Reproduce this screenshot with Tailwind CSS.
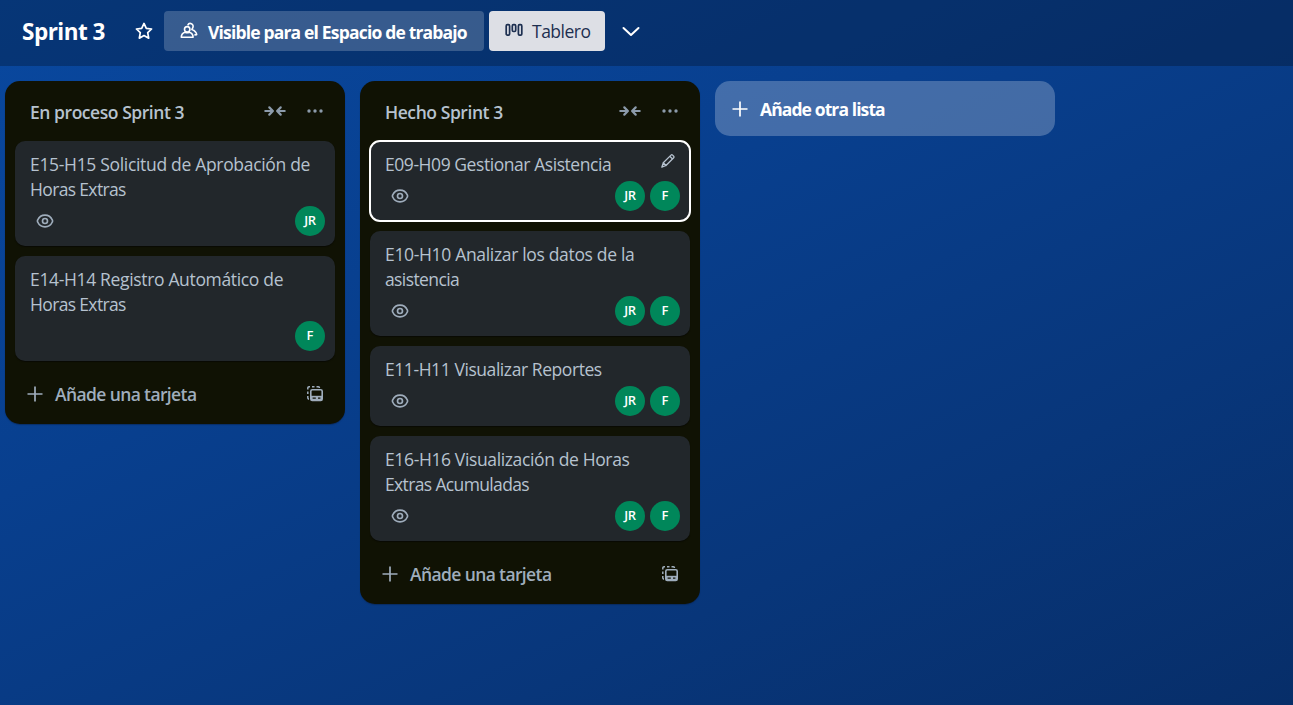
<!DOCTYPE html>
<html lang="es">
<head>
<meta charset="utf-8">
<title>Sprint 3</title>
<script src="https://cdn.jsdelivr.net/npm/@tailwindcss/browser@4"></script>
</head>
<body class="h-[705px] w-[1293px] overflow-hidden bg-[linear-gradient(155deg,#09489f_0%,#083f8e_38%,#08367a_72%,#072e69_100%)] font-['Open_Sans','Noto_Sans',sans-serif] text-[17.5px] leading-[25px] text-[#b6c2cf]">
<svg class="hidden">
  <symbol id="eye" viewBox="0 0 24 24"><g fill="none" stroke="currentColor" stroke-width="2"><path d="M12 5C7 5 4.500 8 3.200 10.800a2.500 2.500 0 0 0 0 2.400C4.500 16 7 19 12 19s7.500-3 8.800-5.800a2.500 2.500 0 0 0 0-2.400C19.500 8 17 5 12 5z"/><circle cx="12" cy="12" r="3"/></g></symbol>
  <symbol id="collapse" viewBox="0 0 24 14"><path d="M2.300 7H9.500M6.300 3.400 9.900 7 6.300 10.600M21.700 7H14.500M17.700 3.400 14.100 7l3.600 3.600" fill="none" stroke="currentColor" stroke-width="2.200" stroke-linecap="round" stroke-linejoin="round"/></symbol>
  <symbol id="dots" viewBox="0 0 20 20"><g fill="currentColor"><circle cx="4" cy="10" r="1.700"/><circle cx="10" cy="10" r="1.700"/><circle cx="16" cy="10" r="1.700"/></g></symbol>
  <symbol id="plus" viewBox="0 0 20 20"><path d="M10 2.500v15M2.500 10h15" fill="none" stroke="currentColor" stroke-width="1.700"/></symbol>
  <symbol id="template" viewBox="0 0 20 20"><path d="M2.800 5.500V4a1.200 1.200 0 0 1 1.200-1.200h1M7 2.800h2.500M11.500 2.800h1.800q1.200 0 1.200 1.200M2.800 7.500v2.500M2.800 12v1.800a1.200 1.200 0 0 0 1.200 1.200" fill="none" stroke="currentColor" stroke-width="1.500"/><rect x="5.800" y="5.800" width="11.400" height="10.600" rx="1.500" fill="none" stroke="currentColor" stroke-width="1.600"/><path d="M6 11.800h11v4.600H6z" fill="currentColor"/><path d="M7.600 13.400h3.200v1.300H7.600zM13 13.400h2.400v1.300H13z" fill="#101204"/></symbol>
</svg>

<header class="flex h-[66px] items-center bg-black/25 pb-1 pl-[22px] text-white">
  <h1 class="w-[112px] text-[22.5px] font-bold tracking-[-0.5px]">Sprint 3</h1>
  <svg class="size-5 shrink-0" viewBox="0 0 20 20"><path d="M10 2.400 12.300 7.400 17.600 8 13.700 11.700 14.700 17.200 10 14.500 5.300 17.200 6.300 11.700 2.400 8 7.700 7.400z" fill="none" stroke="currentColor" stroke-width="1.700" stroke-linejoin="round"/></svg>
  <div class="ml-[10px] flex h-10 w-[320px] items-center rounded bg-white/20 pl-[15px]">
    <svg class="size-5 shrink-0" viewBox="0 0 20 20"><g fill="none" stroke="currentColor" stroke-width="1.600" stroke-linejoin="round"><circle cx="8.200" cy="8.300" r="2.700"/><path d="M2.300 16.300c0-2.700 1.900-4.600 4-5.100q1.900 1 3.800 0c2.100.5 4 2.400 4 5.100z"/><path d="M8.700 4.300c.8-1.700 2.300-2.200 3.700-1.600 1.800.8 2.200 2.800 1.200 4.500l-.7 1.300c2.600 1 4.500 2.900 4.800 5.200l-2.300.2"/></g></svg>
    <span class="ml-[9px] whitespace-nowrap pt-[3px] font-bold tracking-[-0.82px]">Visible para el Espacio de trabajo</span>
  </div>
  <div class="ml-[5px] flex h-10 w-[116px] items-center rounded bg-[#dddfe5] pl-[15px] text-[#1d2f50]">
    <svg class="mt-[-3px] size-5 shrink-0" viewBox="0 0 20 20"><g fill="none" stroke="currentColor" stroke-width="1.700"><rect x="2.200" y="4.700" width="3.400" height="10.400" rx="1.200"/><rect x="8.300" y="4.700" width="3.400" height="6.800" rx="1.200"/><rect x="14.400" y="4.700" width="3.400" height="10.400" rx="1.200"/></g></svg>
    <span class="ml-2 pt-[1px] tracking-[-0.5px]">Tablero</span>
  </div>
  <svg class="ml-[15.500px] size-5" viewBox="0 0 20 20"><path d="M2.500 7 10 14l7.500-7" fill="none" stroke="currentColor" stroke-width="2" stroke-linecap="round" stroke-linejoin="round"/></svg>
</header>

<main class="flex items-start gap-[15px] pt-[15px] pl-[5px]">
  <section class="flex h-[343px] w-[340px] flex-col gap-[10px] rounded-[15px] bg-[#101204] px-[10px] shadow-[0_1px_1px_#091e4280]">
    <div class="flex h-[50px] items-center pl-[15px]">
      <h2 class="flex-1 pt-[13px] font-semibold tracking-[-0.45px]">En proceso Sprint 3</h2>
      <svg class="mt-[10px] h-[14px] w-6 text-[#8c9bab]"><use href="#collapse"/></svg>
      <svg class="mt-[10px] mr-[10px] ml-[18px] size-5 text-[#8c9bab]"><use href="#dots"/></svg>
    </div>
    <article class="flex h-[105px] flex-col rounded-[10px] bg-[#22272b] pt-[11px] pr-[10px] pl-[15px] shadow-[0_1px_1px_#03040480]">
      <p class="whitespace-nowrap tracking-[-0.32px]">E15-H15 Solicitud de Aprobación de<br><span class="tracking-[-0.65px]">Horas Extras</span></p>
      <div class="mt-1 flex items-center gap-[5px]"><svg class="mr-auto ml-[5px] size-5 text-[#9fadbc]"><use href="#eye"/></svg><span class="grid size-[30px] place-items-center rounded-full bg-[#00875a] pb-px text-[13px] font-semibold text-white tracking-[-0.3px]">JR</span></div>
    </article>
    <article class="flex h-[105px] flex-col rounded-[10px] bg-[#22272b] pt-[11px] pr-[10px] pl-[15px] shadow-[0_1px_1px_#03040480]">
      <p class="whitespace-nowrap tracking-[-0.34px]">E14-H14 Registro Automático de<br><span class="tracking-[-0.65px]">Horas Extras</span></p>
      <div class="mt-1 flex items-center justify-end"><span class="grid size-[30px] place-items-center rounded-full bg-[#00875a] pb-px text-[13px] font-semibold text-white">F</span></div>
    </article>
    <footer class="flex h-[46px] items-center pl-[10px] text-[#9fadbc]">
      <svg class="size-5"><use href="#plus"/></svg>
      <span class="ml-[10px] flex-1 pt-[1px] font-semibold tracking-[-0.62px]">Añade una tarjeta</span>
      <svg class="mr-[10px] size-5"><use href="#template"/></svg>
    </footer>
  </section>

  <section class="flex h-[523px] w-[340px] flex-col gap-[10px] rounded-[15px] bg-[#101204] px-[10px] shadow-[0_1px_1px_#091e4280]">
    <div class="flex h-[50px] items-center pl-[15px]">
      <h2 class="flex-1 pt-[13px] font-semibold tracking-[-0.43px]">Hecho Sprint 3</h2>
      <svg class="mt-[10px] h-[14px] w-6 text-[#8c9bab]"><use href="#collapse"/></svg>
      <svg class="mt-[10px] mr-[10px] ml-[18px] size-5 text-[#8c9bab]"><use href="#dots"/></svg>
    </div>
    <article class="flex h-[80px] flex-col rounded-[10px] bg-[#22272b] pt-[11px] pr-[10px] pl-[15px] outline-2 -outline-offset-1 outline-white">
      <div class="flex items-center justify-between"><p class="whitespace-nowrap tracking-[-0.44px]">E09-H09 Gestionar Asistencia</p><svg class="mt-[-8px] mr-[2px] size-5" viewBox="0 0 20 20"><g fill="none" stroke="currentColor" stroke-width="1.300" stroke-linejoin="round"><path d="m5.300 11.800 7.700-7.700q.8-.8 1.600 0l1.100 1.100q.8.800 0 1.600l-7.700 7.700zM5.300 11.800l-1.500 4.400 4.200-1.700M11.800 5.300 14.500 8"/></g></svg></div>
      <div class="mt-1 flex items-center gap-[5px]"><svg class="mr-auto ml-[5px] size-5 text-[#9fadbc]"><use href="#eye"/></svg><span class="grid size-[30px] place-items-center rounded-full bg-[#00875a] pb-px text-[13px] font-semibold text-white tracking-[-0.3px]">JR</span><span class="grid size-[30px] place-items-center rounded-full bg-[#00875a] pb-px text-[13px] font-semibold text-white">F</span></div>
    </article>
    <article class="flex h-[105px] flex-col rounded-[10px] bg-[#22272b] pt-[11px] pr-[10px] pl-[15px] shadow-[0_1px_1px_#03040480]">
      <p class="whitespace-nowrap tracking-[-0.33px]">E10-H10 Analizar los datos de la<br><span class="tracking-[-0.6px]">asistencia</span></p>
      <div class="mt-1 flex items-center gap-[5px]"><svg class="mr-auto ml-[5px] size-5 text-[#9fadbc]"><use href="#eye"/></svg><span class="grid size-[30px] place-items-center rounded-full bg-[#00875a] pb-px text-[13px] font-semibold text-white tracking-[-0.3px]">JR</span><span class="grid size-[30px] place-items-center rounded-full bg-[#00875a] pb-px text-[13px] font-semibold text-white">F</span></div>
    </article>
    <article class="flex h-[80px] flex-col rounded-[10px] bg-[#22272b] pt-[11px] pr-[10px] pl-[15px] shadow-[0_1px_1px_#03040480]">
      <p class="whitespace-nowrap tracking-[-0.43px]">E11-H11 Visualizar Reportes</p>
      <div class="mt-1 flex items-center gap-[5px]"><svg class="mr-auto ml-[5px] size-5 text-[#9fadbc]"><use href="#eye"/></svg><span class="grid size-[30px] place-items-center rounded-full bg-[#00875a] pb-px text-[13px] font-semibold text-white tracking-[-0.3px]">JR</span><span class="grid size-[30px] place-items-center rounded-full bg-[#00875a] pb-px text-[13px] font-semibold text-white">F</span></div>
    </article>
    <article class="flex h-[105px] flex-col rounded-[10px] bg-[#22272b] pt-[11px] pr-[10px] pl-[15px] shadow-[0_1px_1px_#03040480]">
      <p class="whitespace-nowrap tracking-[-0.37px]">E16-H16 Visualización de Horas<br><span class="tracking-[-0.64px]">Extras Acumuladas</span></p>
      <div class="mt-1 flex items-center gap-[5px]"><svg class="mr-auto ml-[5px] size-5 text-[#9fadbc]"><use href="#eye"/></svg><span class="grid size-[30px] place-items-center rounded-full bg-[#00875a] pb-px text-[13px] font-semibold text-white tracking-[-0.3px]">JR</span><span class="grid size-[30px] place-items-center rounded-full bg-[#00875a] pb-px text-[13px] font-semibold text-white">F</span></div>
    </article>
    <footer class="flex h-[46px] items-center pl-[10px] text-[#9fadbc]">
      <svg class="size-5"><use href="#plus"/></svg>
      <span class="ml-[10px] flex-1 pt-[1px] font-semibold tracking-[-0.62px]">Añade una tarjeta</span>
      <svg class="mr-[10px] size-5"><use href="#template"/></svg>
    </footer>
  </section>

  <button class="flex h-[55px] w-[340px] items-center rounded-[15px] bg-white/24 pl-[15px] text-white">
    <svg class="size-5"><use href="#plus"/></svg>
    <span class="ml-[10px] pt-[2px] font-bold tracking-[-0.9px]">Añade otra lista</span>
  </button>
</main>
</body>
</html>
